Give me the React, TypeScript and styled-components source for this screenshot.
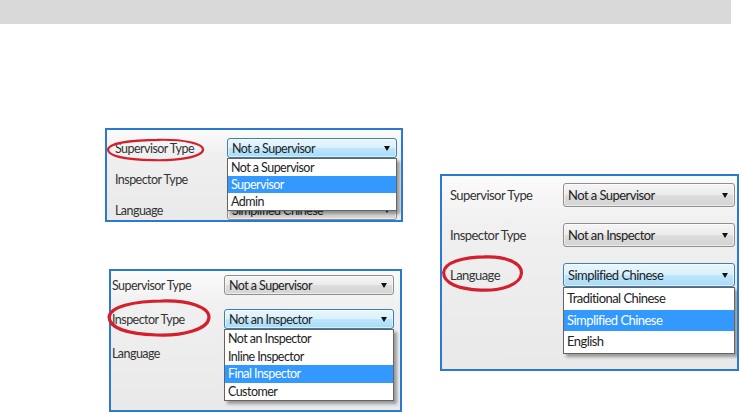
import React from 'react';
import styled, { createGlobalStyle } from 'styled-components';

type Metrics = {
  padTop: number;
  padLeft: number;
  labelW: number;
  selW: number;
  selH: number;
  gap: number;
  itemH: number;
  font: number;
};

type Row = { label: string; value: string };

type DialogData = {
  w: number;
  h: number;
  m: Metrics;
  rows: Row[];
  open: number;
  options: string[];
  active: number;
  mark: { left: number; top: number; w: number; h: number; stroke: number };
};

const rows: Row[] = [
  { label: 'Supervisor Type', value: 'Not a Supervisor' },
  { label: 'Inspector Type', value: 'Not an Inspector' },
  { label: 'Language', value: 'Simplified Chinese' },
];

const dialogs: Record<string, DialogData> = {
  supervisor: {
    w: 298,
    h: 94,
    m: { padTop: 8, padLeft: 8, labelW: 112, selW: 170, selH: 22, gap: 11, itemH: 17, font: 12.5 },
    rows,
    open: 0,
    options: ['Not a Supervisor', 'Supervisor', 'Admin'],
    active: 1,
    mark: { left: 1, top: 10, w: 99, h: 24, stroke: 2.2 },
  },
  inspector: {
    w: 293,
    h: 143,
    m: { padTop: 4, padLeft: 1, labelW: 112, selW: 170, selH: 20, gap: 14, itemH: 17.5, font: 12.5 },
    rows,
    open: 1,
    options: ['Not an Inspector', 'Inline Inspector', 'Final Inspector', 'Customer'],
    active: 2,
    mark: { left: -2, top: 29, w: 104, h: 40, stroke: 3.2 },
  },
  language: {
    w: 299,
    h: 197,
    m: { padTop: 7, padLeft: 8, labelW: 113, selW: 172, selH: 24, gap: 16, itemH: 21.5, font: 13 },
    rows,
    open: 2,
    options: ['Traditional Chinese', 'Simplified Chinese', 'English'],
    active: 1,
    mark: { left: 2, top: 80, w: 81, h: 39, stroke: 3.2 },
  },
};

const GlobalStyle = createGlobalStyle`
  html, body {
    margin: 0;
    padding: 0;
    background: #ffffff;
  }
  body {
    width: 742px;
    height: 413px;
    overflow: hidden;
    font-family: Lato, "Liberation Sans", sans-serif;
  }
`;

const Page = styled.div`
  display: flex;
  flex-direction: column;
  width: 742px;
  height: 413px;
`;

const TopBar = styled.div`
  width: 731px;
  height: 24px;
  background: #d9d9d9;
  flex-shrink: 0;
`;

const Content = styled.div`
  display: flex;
  align-items: flex-start;
  padding-left: 105px;
`;

const LeftColumn = styled.div`
  display: flex;
  flex-direction: column;
  gap: 47px;
  margin-top: 104px;
`;

const RightColumn = styled.div`
  margin-top: 150px;
  margin-left: 37px;
`;

const Frame = styled.div<{ $w: number; $h: number; $shift?: number }>`
  position: relative;
  width: ${(p) => p.$w}px;
  height: ${(p) => p.$h}px;
  margin-left: ${(p) => p.$shift || 0}px;
  flex-shrink: 0;
`;

const Panel = styled.div<{ $m: Metrics }>`
  box-sizing: border-box;
  width: 100%;
  height: 100%;
  overflow: hidden;
  border: 2px solid #2a7ad2;
  background: linear-gradient(180deg, #fbfbfb 0%, #f0f0f0 25%, #e9e9e9 100%);
  padding: ${(p) => p.$m.padTop}px 0 0 ${(p) => p.$m.padLeft}px;
  display: flex;
  flex-direction: column;
  gap: ${(p) => p.$m.gap}px;
  font-size: ${(p) => p.$m.font}px;
  letter-spacing: -0.55px;
  color: #2b2b2b;
`;

const FieldRow = styled.div<{ $m: Metrics }>`
  display: grid;
  grid-template-columns: ${(p) => p.$m.labelW}px ${(p) => p.$m.selW}px;
  align-items: center;
  height: ${(p) => p.$m.selH}px;
`;

const Label = styled.div`
  white-space: nowrap;
  color: #333333;
`;

const SelectWrap = styled.div`
  position: relative;
  height: 100%;
`;

const Select = styled.div<{ $open: boolean }>`
  box-sizing: border-box;
  height: 100%;
  display: flex;
  align-items: center;
  padding: 0 18px 0 4px;
  border-radius: 3px;
  white-space: nowrap;
  border: 1px solid ${(p) => (p.$open ? '#3c7fb1' : '#8e8f8f')};
  background: ${(p) =>
    p.$open
      ? 'linear-gradient(180deg, #eaf6fd 0%, #d9f0fc 48%, #bee6fd 52%, #a9dbf6 100%)'
      : 'linear-gradient(180deg, #f6f6f6 0%, #ebebeb 48%, #dddddd 52%, #d4d4d4 100%)'};
  box-shadow: inset 0 0 0 1px rgba(255, 255, 255, 0.55);
  color: #222222;

  &::after {
    content: '';
    position: absolute;
    right: 7px;
    top: 50%;
    margin-top: -2px;
    border-left: 3.5px solid transparent;
    border-right: 3.5px solid transparent;
    border-top: 5px solid #111;
  }
`;

const List = styled.ul`
  position: absolute;
  z-index: 2;
  top: 100%;
  left: 0;
  right: 0;
  margin: 0;
  padding: 0;
  list-style: none;
  background: #ffffff;
  border: 1px solid #646464;
  box-shadow: 3px 3px 3px rgba(0, 0, 0, 0.35);
`;

const Item = styled.li<{ $active: boolean; $h: number }>`
  height: ${(p) => p.$h}px;
  line-height: ${(p) => p.$h}px;
  padding-left: 3px;
  white-space: nowrap;
  background: ${(p) => (p.$active ? '#3399ff' : 'transparent')};
  color: ${(p) => (p.$active ? '#ffffff' : '#222222')};
`;

const Mark = styled.svg<{ $left: number; $top: number; $w: number; $h: number }>`
  position: absolute;
  z-index: 3;
  left: ${(p) => p.$left}px;
  top: ${(p) => p.$top}px;
  width: ${(p) => p.$w}px;
  height: ${(p) => p.$h}px;
  overflow: visible;
  pointer-events: none;
`;

const Dialog: React.FC<{ d: DialogData; shift?: number }> = ({ d, shift }) => (
  <Frame $w={d.w} $h={d.h} $shift={shift}>
    <Panel $m={d.m}>
      {d.rows.map((r, i) => (
        <FieldRow key={r.label} $m={d.m}>
          <Label>{r.label}</Label>
          <SelectWrap>
            <Select $open={i === d.open}>{r.value}</Select>
            {i === d.open && (
              <List>
                {d.options.map((o, j) => (
                  <Item key={o} $active={j === d.active} $h={d.m.itemH}>
                    {o}
                  </Item>
                ))}
              </List>
            )}
          </SelectWrap>
        </FieldRow>
      ))}
    </Panel>
    <Mark
      $left={d.mark.left}
      $top={d.mark.top}
      $w={d.mark.w}
      $h={d.mark.h}
      viewBox="0 0 100 40"
      preserveAspectRatio="none"
    >
      <path
        d="M52 3 C78 2 99 9 98 20 C97 31 74 38 48 37 C20 36 2 30 2 19 C3 9 24 3 56 3"
        fill="none"
        stroke="#d3202c"
        strokeWidth={d.mark.stroke}
        vectorEffect="non-scaling-stroke"
        strokeLinecap="round"
      />
    </Mark>
  </Frame>
);

export default function App() {
  return (
    <Page>
      <GlobalStyle />
      <TopBar />
      <Content>
        <LeftColumn>
          <Dialog d={dialogs.supervisor} />
          <Dialog d={dialogs.inspector} shift={4} />
        </LeftColumn>
        <RightColumn>
          <Dialog d={dialogs.language} />
        </RightColumn>
      </Content>
    </Page>
  );
}
